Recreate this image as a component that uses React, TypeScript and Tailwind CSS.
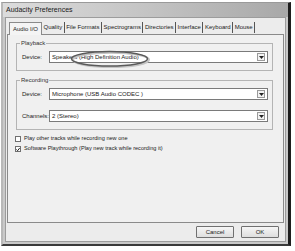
import React from 'react';

const tabs = ['Audio I/O', 'Quality', 'File Formats', 'Spectrograms', 'Directories', 'Interface', 'Keyboard', 'Mouse'];

const Combo: React.FC<{ value: string }> = ({ value }) => (
  <div className="flex-1 h-[12px] bg-white border border-[#7a7a7a] flex items-center pl-[2px]">
    <span className="flex-1 leading-none">{value}</span>
    <div className="w-[8px] h-[8px] mr-[2px] border border-[#9a9a9a] bg-[#f2f2f2] flex items-center justify-center">
      <svg width="5" height="3" viewBox="0 0 5 3">
        <path d="M0 0 H5 L2.5 3 Z" fill="#222" />
      </svg>
    </div>
  </div>
);

const Group: React.FC<{ label: string; className?: string; children: React.ReactNode }> = ({ label, className, children }) => (
  <fieldset className={`border border-[#b4b4b4] ml-[8px] mr-[10px] ${className ?? ''}`}>
    <legend className="ml-[3px] px-[1px] leading-none text-[#333]">{label}</legend>
    {children}
  </fieldset>
);

const Check: React.FC<{ checked?: boolean; label: string }> = ({ checked, label }) => (
  <div className="flex items-center gap-[3px] h-[10px]">
    <div className="w-[6px] h-[6px] border border-[#707070] bg-white flex items-center justify-center">
      {checked && (
        <svg width="5" height="5" viewBox="0 0 5 5">
          <path d="M0.5 2.5 L2 4 L4.5 0.8" stroke="#111" strokeWidth="1.2" fill="none" />
        </svg>
      )}
    </div>
    <span className="leading-none text-[5.6px]">{label}</span>
  </div>
);

export default function App() {
  return (
    <div className="w-[295px] h-[251px] bg-white pt-[2px] pl-[1px] font-['Liberation_Sans',Arial,sans-serif] text-[6px] text-[#222]">
      <div className="w-[290px] h-[244px] flex flex-col border-l-[2px] border-l-[#b8b8b8] border-r-[3px] border-r-[#1e1e1e] border-b-[2px] border-b-[#3a3a3a] border-t border-t-[#9a9a9a] bg-[#c9c9c9]">
        {/* title bar */}
        <div className="h-[14px] flex items-center pl-[3px] bg-gradient-to-r from-[#dcdcdc] via-[#c4c4c4] to-[#a8a8a8] text-[7px] text-[#1a1a1a]">
          Audacity Preferences
        </div>

        <div className="flex-1 flex flex-col bg-[#ececec] mx-[2px] mb-[2px] border border-[#9c9c9c] pt-[3px]">
          {/* tabs */}
          <div className="flex items-end h-[13px] pl-[3px]">
            {tabs.map((t, i) =>
              i === 0 ? (
                <div
                  key={t}
                  className="h-[13px] px-[3px] flex items-center bg-[#f4f4f4] border border-[#8a8a8a] border-b-0 relative top-[1px] z-10"
                >
                  {t}
                </div>
              ) : (
                <div key={t} className="h-[11px] px-[1.5px] flex items-center border-r border-[#555] mb-[1px]">
                  {t}
                </div>
              )
            )}
          </div>

          {/* panel */}
          <div className="relative mx-[1px] h-[189px] border border-[#8a8a8a] bg-[#f0f0f0] pt-[5px] flex flex-col">
            <Group label="Playback" className="pb-[7px]">
              <div className="flex items-center pl-[5px] pr-[4px] mt-[5px]">
                <span className="w-[27px]">Device:</span>
                <Combo value="Speakers (High Definition Audio)" />
              </div>
            </Group>

            <Group label="Recording" className="mt-[6px] pb-[7px]">
              <div className="flex items-center pl-[5px] pr-[4px] mt-[5px]">
                <span className="w-[27px]">Device:</span>
                <Combo value="Microphone (USB Audio CODEC )" />
              </div>
              <div className="flex items-center pl-[5px] pr-[4px] mt-[10px]">
                <span className="w-[27px]">Channels:</span>
                <Combo value="2 (Stereo)" />
              </div>
            </Group>

            <div className="flex flex-col mt-[4px] pl-[7px]">
              <Check label="Play other tracks while recording new one" />
              <Check checked label="Software Playthrough (Play new track while recording it)" />
            </div>

            {/* annotation oval */}
            <svg className="absolute left-[60px] top-[14px]" width="84" height="20" viewBox="0 0 84 20">
              <ellipse cx="43" cy="10.8" rx="38" ry="7.2" fill="none" stroke="#c4c4c4" strokeWidth="2.2" />
              <ellipse cx="41.5" cy="9.8" rx="38" ry="7.2" fill="none" stroke="#5a5a5a" strokeWidth="1.5" />
            </svg>
          </div>

          {/* buttons */}
          <div className="flex justify-end gap-[7px] pr-[6px] mt-[3px]">
            <button className="w-[38px] h-[12px] border border-[#707070] rounded-[1px] bg-gradient-to-b from-[#f6f6f6] to-[#dedede] text-[6px] leading-none">
              Cancel
            </button>
            <button className="w-[38px] h-[12px] border border-[#707070] rounded-[1px] bg-gradient-to-b from-[#f6f6f6] to-[#dedede] text-[6px] leading-none">
              OK
            </button>
          </div>
        </div>
      </div>
    </div>
  );
}
